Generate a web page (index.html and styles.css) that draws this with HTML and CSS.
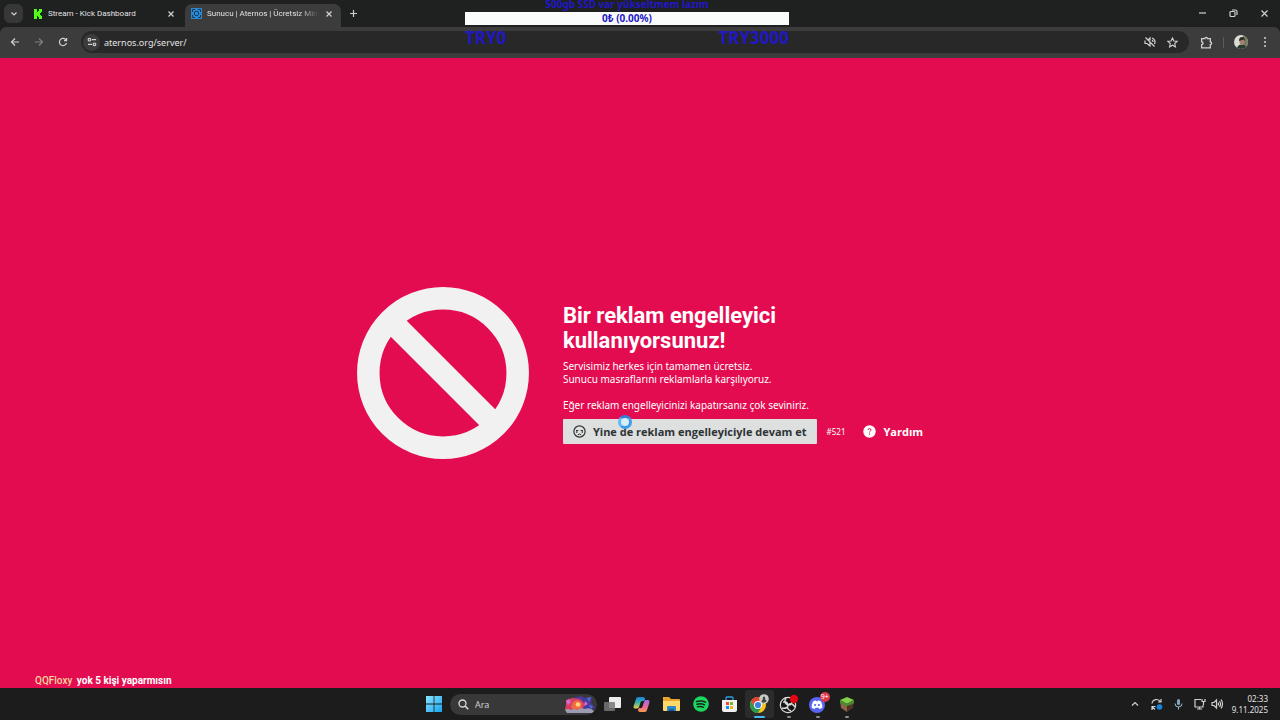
FILE: index.html
```html
<!DOCTYPE html>
<html lang="tr">
<head>
  <meta charset="UTF-8" />
  <meta name="viewport" content="width=device-width, initial-scale=1.0" />
  <title>Sunucu | Aternos | Ücretsiz Minecraft Sunucusu</title>
  <link rel="stylesheet" href="styles.css">
</head>
<body>
  <!-- Browser tabs -->
  <header class="tab-strip">
    <button class="tab-search" aria-label="Sekme ara">
      <svg width="8" height="8" viewBox="0 0 8 8"><path class="line" d="M1.5 2.5 4 5l2.500-2.500" /></svg>
    </button>
    <div class="tab">
      <svg width="10" height="10" viewBox="0 0 10 10"><rect width="10" height="10" rx="1" fill="#132a10" /><path fill="#53fc18" d="M1 0h3v3h1V2h1V0h3v3H8v1H7v2h1v1h1v3H6V8H5V7H4v3H1z" /></svg>
      <span class="tab-title">Stream - Kick Dashboard</span>
      <button class="close" aria-label="Kapat"><svg width="8" height="8" viewBox="0 0 8 8"><path class="line" d="M1.500 1.500l5 5m0-5l-5 5" /></svg></button>
    </div>
    <div class="tab active">
      <svg width="11" height="11" viewBox="0 0 11 11"><rect width="11" height="11" fill="#2b87d1" /><path fill="none" stroke="#173a59" d="M1.500 4V1.500H4M7 1.500h2.500V4M9.500 7v2.500H7M4 9.500H1.500V7M4 3.500h3M7.500 4v3M4 7.500h3M3.500 4v3" /></svg>
      <span class="tab-title fade">Sunucu | Aternos | Ücretsiz Min</span>
      <button class="close" aria-label="Kapat"><svg width="8" height="8" viewBox="0 0 8 8"><path class="line" d="M1.500 1.500l5 5m0-5l-5 5" /></svg></button>
    </div>
    <button class="new-tab" aria-label="Yeni sekme"><svg width="9" height="9" viewBox="0 0 9 9"><path class="line" d="M4.500 1v7M1 4.500h7" /></svg></button>
    <div class="window-buttons">
      <button aria-label="Küçült"><svg width="9" height="9" viewBox="0 0 9 9"><path class="line" d="M1 4h7" /></svg></button>
      <button aria-label="Geri yükle"><svg width="9" height="9" viewBox="0 0 9 9"><rect class="line" x="1" y="2.500" width="5" height="5" rx="1" /><path class="line" d="M3 1h3.500Q8 1 8 2.500V6" /></svg></button>
      <button aria-label="Pencereyi kapat"><svg width="9" height="9" viewBox="0 0 9 9"><path class="line" d="M1.500 1.500l6 6m0-6l-6 6" /></svg></button>
    </div>
  </header>

  <!-- Address bar -->
  <nav class="toolbar">
    <button aria-label="Geri"><svg width="10" height="10" viewBox="0 0 10 10"><path class="line" d="M9 5H1.500M5 1.500 1.500 5 5 8.500" /></svg></button>
    <button class="disabled" aria-label="İleri" disabled><svg width="10" height="10" viewBox="0 0 10 10"><path class="line" d="M1 5h7.500M5 1.500 8.500 5 5 8.500" /></svg></button>
    <button aria-label="Yenile"><svg width="10" height="10" viewBox="0 0 10 10"><path class="line" d="M8.500 6A3.600 3.600 0 1 1 7.700 2.600L8.500 3.500M8.600 1v2.700H6" /></svg></button>
    <div class="address">
      <button class="site-info" aria-label="Site bilgileri"><svg width="10" height="10" viewBox="0 0 10 10"><circle class="line" cx="2.500" cy="2.700" r="1.300" /><path class="line" d="M5 2.700h4M1 7.300h4" /><circle class="line" cx="7.500" cy="7.300" r="1.300" /></svg></button>
      <input type="text" value="aternos.org/server/" aria-label="Adres" />
      <button aria-label="Sesi kapalı"><svg width="12" height="12" viewBox="0 0 12 12"><path class="line" d="M1 4.500v3h2l3 2.500V6.500M4.500 3.500 6 2v2.500M1.500 1.500l9 9M8 4q1 .6 1 2M8 2q3 1 3 4 0 1-.5 2" /></svg></button>
      <button aria-label="Yer işareti"><svg width="11" height="11" viewBox="0 0 12 12"><path class="line" d="M6 1l1.500 3.300 3.600.4L8.400 7.100l.8 3.600L6 8.900l-3.200 1.800.8-3.600L.9 4.700l3.600-.4z" /></svg></button>
    </div>
    <button class="extensions" aria-label="Uzantılar"><svg width="13" height="13" viewBox="0 0 12 12"><path class="line" d="M1.500 2.500h3a1.200 1.200 0 0 1 2.400 0h2.600v3a1.200 1.200 0 0 1 0 2.400v3h-8V8a1.300 1.300 0 0 0 0-2.600z" /></svg></button>
    <span class="divider"></span>
    <button class="profile" aria-label="Profil"><svg width="14" height="14" viewBox="0 0 14 14"><clipPath id="face"><circle cx="7" cy="7" r="7" /></clipPath><g clip-path="url(#face)"><rect width="14" height="14" fill="#d9ddd2" /><path fill="#777a62" d="M9 0h5v14H9z" /><path fill="#263d2f" d="M3 14q0-4 4-4.500 5-.5 6 4.500z" /><ellipse cx="8" cy="6.500" rx="2.500" ry="3.200" fill="#a38471" /><path fill="#312a24" d="M5 6q0-4 3-4t3 4L9.500 4.500z" /></g></svg></button>
    <button aria-label="Menü"><svg width="4" height="12" viewBox="0 0 4 12"><g fill="#d0d0d0"><circle cx="2" cy="2" r="1" /><circle cx="2" cy="6" r="1" /><circle cx="2" cy="10" r="1" /></g></svg></button>
  </nav>

  <!-- Ad blocker notice -->
  <main class="page">
    <section class="notice">
      <svg class="ban" width="172" height="172" viewBox="0 0 172 172"><circle cx="86" cy="86" r="74.700" /><path d="M34 34l104 104" /></svg>
      <div class="notice-text">
        <h1>Bir reklam engelleyici<br>kullanıyorsunuz!</h1>
        <p>Servisimiz herkes için tamamen ücretsiz.<br>Sunucu masraflarını reklamlarla karşılıyoruz.<br><br>Eğer reklam engelleyicinizi kapatırsanız çok seviniriz.</p>
        <div class="actions">
          <button class="continue">
            <svg width="13" height="13" viewBox="0 0 13 13"><circle cx="6.500" cy="6.500" r="5.600" fill="none" stroke="#2c3436" stroke-width="1.200" /><path fill="none" stroke="#2c3436" d="M4.800 9.800q1.700-1.600 3.400 0M3 5.500h2.300M7.700 5.500H10M3.800 5.500v2.500M9.200 5.500v2.500" /></svg>
            Yine de reklam engelleyiciyle devam et
          </button>
          <span class="code">#521</span>
          <a class="help" href="#">
            <svg width="13" height="13" viewBox="0 0 13 13"><circle cx="6.500" cy="6.500" r="6.200" fill="#fff" /><path fill="none" stroke="#e50c51" stroke-width="1" d="M5 5q0-1.400 1.500-1.400T8 5q0 .7-.8 1.200-.7.400-.7 1.200M6.500 8.500v1.200" /></svg>
            Yardım
          </a>
        </div>
      </div>
    </section>
    <p class="chat"><span class="chat-user">QQFloxy</span> yok 5 kişi yaparmısın</p>
  </main>

  <!-- Taskbar -->
  <footer class="taskbar">
    <div class="dock">
      <button aria-label="Başlat"><svg width="16" height="16" viewBox="0 0 16 16"><linearGradient id="win" x2="1" y2="1"><stop stop-color="#8be4ff" /><stop offset="1" stop-color="#16a5ef" /></linearGradient><path fill="url(#win)" d="M0 0h7.600v7.600H0zM8.400 0H16v7.600H8.400zM0 8.400h7.600V16H0zM8.400 8.400H16V16H8.400z" /></svg></button>
      <label class="search">
        <svg width="11" height="11" viewBox="0 0 11 11"><circle cx="4.500" cy="4.500" r="3.500" fill="none" stroke="#ddd" stroke-width="1.300" /><path stroke="#ddd" stroke-width="1.500" d="M7 7l3.300 3.300" /></svg>
        <input type="text" placeholder="Ara" aria-label="Ara" />
        <svg width="31" height="17" viewBox="0 0 31 17"><path fill="#493a9e" d="M9 2l8-2 4 2 7-1-1 6 4 5-6 3H8z" /><path fill="#d83f63" d="M2 4l6-2 8 1 5 5-3 6-11 2-6-2 1-6z" /><path fill="#f06b42" d="M9 6l4-2 5 3-1 6-7 1-3-3z" /><circle cx="14" cy="8.500" r="2.300" fill="#ffd27b" /><path fill="#d967d0" d="M2 5l3-2 2 3-3 3zM21 5l3 3-4 2z" /><path fill="#4a71d2" d="M23 2l4-1-2 5zM25 9l4 1-2 3z" /><path fill="#9b9caf" d="M1 14q3-2 6 0 3-2 6 0 4-3 8-1 5-2 9 2l-2 2H3z" /></svg>
      </label>
      <div class="apps">
        <button aria-label="Görev görünümü"><svg width="17" height="17" viewBox="0 0 17 17"><rect x="5" y="1" width="12" height="11" rx="1" fill="#ededed" /><rect x="0" y="6" width="11" height="9" rx="1" fill="#777" fill-opacity=".85" /></svg></button>
        <button aria-label="Copilot"><svg width="17" height="17" viewBox="0 0 17 17"><linearGradient id="cp1" x2="0" y2="1"><stop stop-color="#1682df" /><stop offset=".5" stop-color="#3cb6a0" /><stop offset="1" stop-color="#f0c84a" /></linearGradient><linearGradient id="cp2" x2="0" y2="1"><stop stop-color="#9c69e8" /><stop offset=".6" stop-color="#ed6b91" /><stop offset="1" stop-color="#f79a4a" /></linearGradient><path fill="url(#cp1)" d="M5 1h5q2 0 2 2l-1 2H9q-1 0-1.500 1.500L6 11q-.5 1.500-2 1.500H2Q0 12.500.7 10L3 3q.5-2 2-2z" /><path fill="url(#cp2)" d="M12 4h3q2 0 1.300 3L14 14q-.5 2-2 2H7q-2 0-2-2l1-2h2q1 0 1.500-1.500L11 6q.3-1 1-2z" /></svg></button>
        <button aria-label="Dosya Gezgini"><svg width="17" height="16" viewBox="0 0 17 16"><path fill="#e7a52d" d="M0 1h6l2 2h8q1 0 1 1v10H0z" /><path fill="#ffd86a" d="M0 5h17v9q0 1-1 1H1q-1 0-1-1z" /><path fill="#2787cd" d="M4 15v-4q0-1 1-1h7q1 0 1 1v4z" /><path fill="#175b9b" d="M6 13h5v2H6z" /></svg></button>
        <button aria-label="Spotify"><svg width="16" height="16" viewBox="0 0 16 16"><circle cx="8" cy="8" r="7.800" fill="#1ed760" /><path fill="none" stroke="#16261b" stroke-linecap="round" stroke-width="1.500" d="M3.500 5.500q5-1.500 9 .7M4 8.200q4-1.200 7.500.6M4.500 10.700q3.300-.8 6 .6" /></svg></button>
        <button aria-label="Microsoft Store"><svg width="17" height="17" viewBox="0 0 17 17"><path fill="none" stroke="#2d9de0" stroke-width="1.300" d="M5 5V2q0-1 1-1h5q1 0 1 1v3" /><path fill="#f1f1f1" d="M1 4h15v10q0 2-2 2H3q-2 0-2-2z" /><path fill="#ef4b32" d="M5 6h3v3H5z" /><path fill="#78b82a" d="M9 6h3v3H9z" /><path fill="#1694dd" d="M5 10h3v3H5z" /><path fill="#f6b51b" d="M9 10h3v3H9z" /></svg></button>
        <button class="running current" aria-label="Chrome"><svg width="20" height="20" viewBox="0 0 20 20"><circle cx="9" cy="11" r="8" fill="#f8c51c" /><path fill="#e34133" d="M2.100 7A8 8 0 0 1 16 7H9l-3.500 6z" /><path fill="#279a4d" d="M2.100 7A8 8 0 0 0 9 19l3.500-6L9 15l-3.500-2z" /><circle cx="9" cy="11" r="4" fill="#fff" /><circle cx="9" cy="11" r="3.100" fill="#3b82e5" /><circle cx="15" cy="5" r="4.800" fill="#c7cbc4" /><path fill="#45443f" d="M12.500 8q.5-2.500 1.500-2.700-.8-2.300 1-2.800 1.800.5 1 2.800 1.500.2 1.500 2.200-2.500 2-5 .5z" /></svg></button>
        <button class="running" aria-label="OBS Studio"><svg width="20" height="20" viewBox="0 0 20 20"><circle cx="9" cy="11" r="7.700" fill="#151515" stroke="#ddd" stroke-width="1.200" /><path fill="none" stroke="#d9d9d9" stroke-width="1.500" d="M7 4q-3 5 2 7 5 0 4-5M16 13q-3-5-7-2-2 4 3 6M3 14q6 1 6-3-1-4-5-3" /><circle cx="15" cy="5" r="4.200" fill="#e30613" /></svg></button>
        <button class="running" aria-label="Discord">
          <svg width="20" height="20" viewBox="0 0 20 20"><circle cx="9" cy="11" r="8" fill="#5865f2" /><path fill="#fff" d="M5 7.500q1.500-1 3-1l.4.800h1.200l.4-.8q1.500 0 3 1 1.500 3 1.400 6-1.300 1.200-3 1.500l-.8-1.300H7.400L6.600 15q-1.700-.3-3-1.500.1-3 1.400-6z" /><circle cx="7.100" cy="11" r="1.100" fill="#5865f2" /><circle cx="10.900" cy="11" r="1.100" fill="#5865f2" /></svg>
          <span class="badge">9+</span>
        </button>
        <button class="running" aria-label="Minecraft"><svg width="16" height="17" viewBox="0 0 16 17"><path fill="#7fcf4a" d="M8 1l7 3-7 4-7-4z" /><path fill="#8a6046" d="M1 4l7 4v8l-6-4z" /><path fill="#4d3428" d="M15 4L8 8v8l6-4z" /><path fill="#4b8c2c" d="M1 4l7 4v2L6 9v1L4 8v1L1 7zM15 4L8 8v2l2-1v1l2-2v1l3-2z" /><path fill="#a07655" d="M3 9l2 1v1L3 10zM6 12l1 1v1l-1-1z" /></svg></button>
      </div>
    </div>
    <div class="tray">
      <svg width="8" height="8" viewBox="0 0 8 8"><path class="line" d="M1 5.500l3-3 3 3" /></svg>
      <svg width="12" height="13" viewBox="0 0 12 13"><path class="line" d="M1 5.500a4.500 4.500 0 0 1 8.500-1.500M10 1v3H7M1 12V8.500h3.500M1 8.500l3 3" /><circle cx="8.500" cy="9" r="2.800" fill="#1685dc" /></svg>
      <svg class="mic" width="9" height="12" viewBox="0 0 9 12"><rect x="3" y="1" width="3" height="6" rx="1.500" fill="#80a7c0" /><path fill="none" stroke="#9ebdce" d="M1 5.500q0 3.500 3.500 3.500T8 5.500M4.500 9v2.500" /></svg>
      <svg class="network" width="12" height="12" viewBox="0 0 12 12"><path class="line" d="M7 1.500H1v7.500h8V7M3 11h5M5.500 9v2M8 1v2.500h3V1M9.500 3.500V7" /></svg>
      <svg width="12" height="12" viewBox="0 0 12 12"><path class="line" d="M1 4.500v3h2l2.500 2.500V2L3 4.500zM7 4.500q1 1.500 0 3M8.500 3q2 3 0 6M10 1.500q3 4.500 0 9" /></svg>
      <time class="clock">02:33<br>9.11.2025</time>
    </div>
  </footer>

  <!-- Stream donation goal -->
  <aside class="goal">
    <div class="goal-title">500gb SSD var yükseltmem lazım</div>
    <div class="goal-bar">0₺ (0.00%)</div>
    <div class="goal-range"><span>TRY0</span><span>TRY3000</span></div>
  </aside>
  <span class="busy-cursor"></span>
</body>
</html>
```
FILE: styles.css
```css
* {
  margin: 0;
  padding: 0;
  box-sizing: border-box;
}
body {
  display: flex;
  flex-direction: column;
  min-height: 100vh;
  background: #1c1c1c;
  color: #e3e3e3;
  font-family: "Noto Sans", sans-serif;
  font-size: 9px;
  overflow: hidden;
}
button, input {
  border: none;
  background: none;
  color: inherit;
  font: inherit;
}
button {
  display: flex;
  align-items: center;
  justify-content: center;
}
svg {
  display: block;
  flex-shrink: 0;
}
.line {
  fill: none;
  stroke: #d0d0d0;
  stroke-width: 1.2;
}

/* Tabs */
.tab-strip {
  display: flex;
  align-items: center;
  height: 27px;
  padding-left: 4px;
  background: #1f2020;
}
.tab-search {
  width: 19px;
  height: 19px;
  border-radius: 6px;
  background: #373737;
}
.tab {
  display: flex;
  align-items: center;
  width: 162px;
  height: 27px;
  gap: 5px;
  padding: 0 10px;
}
.tab.active {
  align-self: flex-end;
  width: 156px;
  height: 23px;
  padding: 0 8px 4px 6px;
  border-radius: 7px 7px 0 0;
  background: #3c3c3c;
}
.tab-title {
  flex: 1;
  font-family: Roboto, sans-serif;
  font-size: 8px;
  white-space: nowrap;
}
.fade {
  -webkit-mask-image: linear-gradient(to right, #000 80%, transparent);
  mask-image: linear-gradient(to right, #000 80%, transparent);
}
.new-tab {
  width: 24px;
  height: 23px;
}
.window-buttons {
  display: flex;
  margin-left: auto;
}
.window-buttons button {
  width: 31px;
  height: 27px;
}

/* Toolbar */
.toolbar {
  display: flex;
  align-items: center;
  height: 31px;
  padding: 0 8px 1px 3px;
  border-radius: 6px 6px 0 0;
  background: #3c3c3c;
}
.toolbar > button {
  width: 24px;
  height: 24px;
}
.disabled {
  opacity: 0.45;
}
.address {
  display: flex;
  flex: 1;
  align-items: center;
  height: 22px;
  margin-left: 6px;
  padding: 0 6px 0 2px;
  border-radius: 11px;
  background: #282828;
}
.address button {
  width: 22px;
}
.address .site-info {
  width: 17px;
  height: 17px;
  border-radius: 50%;
  background: #3c3c3c;
}
.address input {
  flex: 1;
  padding-left: 4px;
  font-size: 9px;
}
.toolbar .extensions {
  width: 34px;
}
.divider {
  width: 1px;
  height: 11px;
  background: #5b5b5b;
}
.toolbar .profile {
  width: 34px;
}
.toolbar > button:last-child {
  width: 14px;
}

/* Page */
.page {
  display: flex;
  flex: 1;
  align-items: center;
  justify-content: center;
  position: relative;
  background: #e40c50;
  color: #fff;
}
.notice {
  display: flex;
  align-items: center;
  gap: 34px;
}
.ban {
  fill: none;
  stroke: #f1f1f1;
  stroke-width: 22.5;
}
.notice-text {
  display: flex;
  flex-direction: column;
  gap: 7px;
}
h1 {
  font-family: Roboto, sans-serif;
  font-size: 22px;
  line-height: 25px;
}
.notice p {
  font-size: 10px;
  line-height: 13px;
}
.actions {
  display: flex;
  align-items: center;
}
.continue {
  gap: 7px;
  height: 25px;
  padding: 0 10px;
  border-radius: 1px;
  background: #dedfdf;
  color: #2c3436;
  font-family: "Open Sans", sans-serif;
  font-size: 11px;
  font-weight: bold;
}
.code {
  margin: 0 18px 0 10px;
  font-size: 8px;
}
.help {
  display: flex;
  align-items: center;
  gap: 7px;
  color: #fff;
  font-family: "Open Sans", sans-serif;
  font-size: 11px;
  font-weight: bold;
  text-decoration: none;
}
.chat {
  position: absolute;
  left: 35px;
  bottom: 0;
  font-family: Roboto, sans-serif;
  font-size: 10px;
  font-weight: bold;
  line-height: 14px;
}
.chat-user {
  margin-right: 2px;
  color: #f6d39b;
  font-weight: 500;
}

/* Taskbar */
.taskbar {
  display: grid;
  grid-template-columns: 1fr auto 1fr;
  align-items: center;
  height: 32px;
}
.dock {
  display: flex;
  grid-column: 2;
  align-items: center;
}
.dock > button {
  width: 32px;
}
.search {
  display: flex;
  align-items: center;
  width: 147px;
  height: 21px;
  padding: 0 2px 0 8px;
  border-radius: 11px;
  background: #383838;
}
.search input {
  flex: 1;
  min-width: 0;
  padding-left: 6px;
}
.search input::placeholder {
  color: #d0d0d0;
}
.apps {
  display: grid;
  grid-template-columns: repeat(9, 1fr);
  width: 264px;
  margin-left: 1px;
}
.apps button {
  position: relative;
  height: 28px;
}
.running::after {
  content: "";
  position: absolute;
  bottom: 0;
  width: 4px;
  height: 2px;
  border-radius: 1px;
  background: #8b8b8b;
}
.current {
  border-radius: 3px;
  background: #2b2b2b;
}
.current::after {
  width: 11px;
  background: #4cb5f0;
}
.badge {
  position: absolute;
  top: 2px;
  right: 3px;
  width: 10px;
  border-radius: 5px;
  background: #d9384c;
  color: #fff;
  font-size: 7px;
  line-height: 10px;
}
.tray {
  display: flex;
  align-items: center;
  justify-content: flex-end;
  padding-right: 12px;
}
.tray svg {
  margin-right: 5px;
}
.tray svg:first-child {
  margin-right: 12px;
}
.tray .mic {
  margin: 0 11px 0 6px;
}
.clock {
  width: 40px;
  font-size: 8px;
  line-height: 11px;
  text-align: right;
  white-space: nowrap;
}

/* Overlays */
.goal {
  position: absolute;
  top: -3px;
  left: 50%;
  width: 324px;
  margin-left: -175px;
  color: #2118c4;
  font-family: "Noto Sans", sans-serif;
  font-weight: bold;
  text-align: center;
}
.goal-title {
  font-size: 10px;
  line-height: 15px;
}
.goal-bar {
  background: #fafcfc;
  font-size: 10px;
  line-height: 13px;
}
.goal-range {
  display: flex;
  justify-content: space-between;
  font-size: 17px;
  line-height: 26px;
}
.busy-cursor {
  position: absolute;
  top: 415px;
  left: 618px;
  width: 14px;
  height: 14px;
  border: 3px solid #3f9de8;
  border-top-color: #2d7fdb;
  border-left-color: #64b9f4;
  border-radius: 50%;
  background: #d8edf8;
}
```
